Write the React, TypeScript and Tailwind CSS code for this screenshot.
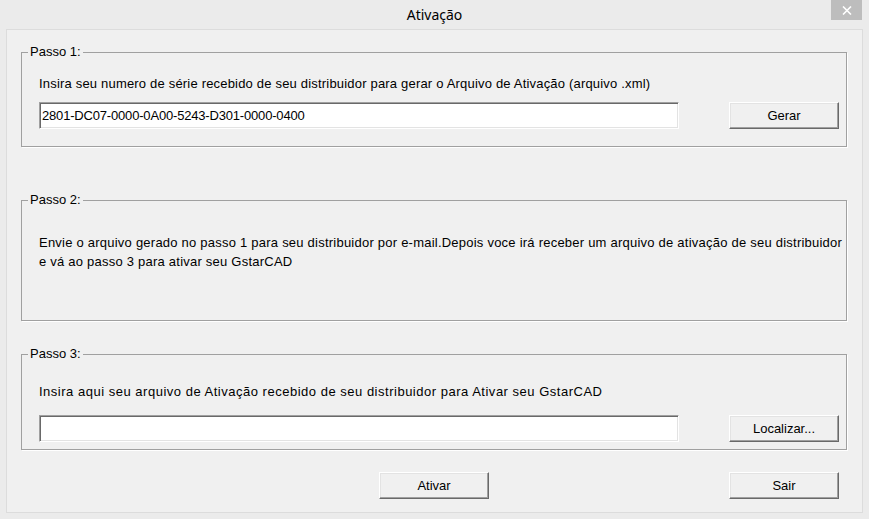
const font = { fontFamily: '"Liberation Sans", Arial, sans-serif' }

const GroupBox = ({ label, className, children }: { label: string; className: string; children: React.ReactNode }) => (
  <div className={`relative ml-[14px] w-[826px] border border-[#a0a0a0] shadow-[1px_1px_0_#ffffff] ${className}`}>
    <span className="absolute left-[6px] top-[-9px] bg-[#f0f0f0] px-[2px] text-[13px] leading-[15px] text-black">
      {label}
    </span>
    {children}
  </div>
)

const Field = ({ value }: { value: string }) => (
  <div className="flex h-[27px] w-[640px] items-center border border-t-[#a0a0a0] border-l-[#a0a0a0] border-r-white border-b-white bg-white pl-[2px] text-[13px] tracking-[-0.18px] text-black shadow-[inset_1px_1px_0_#696969,inset_-1px_-1px_0_#e3e3e3]">
    {value}
  </div>
)

const Btn = ({ label, className = '' }: { label: string; className?: string }) => (
  <button className={`flex h-[27px] w-[110px] items-center justify-center border border-t-white border-l-white border-r-[#696969] border-b-[#696969] bg-[#f0f0f0] text-[13px] text-black shadow-[inset_-1px_-1px_0_#a0a0a0,inset_1px_1px_0_#e3e3e3] ${className}`}>
    {label}
  </button>
)

export default function App() {
  return (
    <div className="flex h-[519px] w-[869px] flex-col bg-[#ebebeb]" style={font}>
      <div className="relative flex h-[29px] shrink-0 items-center justify-center">
        <span className="text-[14px] text-black" style={{ fontFamily: '"Noto Sans", "Open Sans", sans-serif' }}>
          Ativação
        </span>
        <div className="absolute right-[7px] top-0 flex h-[20px] w-[31px] items-center justify-center bg-[#bdbdbd]">
          <svg width="10" height="9" viewBox="0 0 10 9">
            <path d="M1 0.5 L9 8.5 M9 0.5 L1 8.5" stroke="#ffffff" strokeWidth="1.6" />
          </svg>
        </div>
      </div>

      <div className="mx-[6px] flex h-[484px] shrink-0 flex-col border border-[#dcdcdc] bg-[#f0f0f0] text-black">
        <GroupBox label="Passo 1:" className="mt-[22px] h-[95px]">
          <div className="pl-[17px] pt-[23px]">
            <p className="text-[13px] leading-[15px] tracking-[0.19px]">
              Insira seu numero de série recebido de seu distribuidor para gerar o Arquivo de Ativação (arquivo .xml)
            </p>
            <div className="mt-[11px] flex">
              <Field value="2801-DC07-0000-0A00-5243-D301-0000-0400" />
              <Btn label="Gerar" className="ml-[50px]" />
            </div>
          </div>
        </GroupBox>

        <GroupBox label="Passo 2:" className="mt-[53px] h-[121px]">
          <p className="pl-[17px] pt-[32px] text-[13px] leading-[19px] tracking-[0.23px]">
            Envie o arquivo gerado no passo 1 para seu distribuidor por e-mail.Depois voce irá receber um arquivo de ativação de seu distribuidor
            <br />e vá ao passo 3 para ativar seu GstarCAD
          </p>
        </GroupBox>

        <GroupBox label="Passo 3:" className="mt-[33px] h-[96px]">
          <div className="pl-[17px] pt-[29px]">
            <p className="text-[13px] leading-[15px] tracking-[0.51px]">
              Insira aqui seu arquivo de Ativação recebido de seu distribuidor para Ativar seu GstarCAD
            </p>
            <div className="mt-[16px] flex">
              <Field value="" />
              <Btn label="Localizar..." className="ml-[50px]" />
            </div>
          </div>
        </GroupBox>

        <div className="mt-[22px] flex pl-[372px]">
          <Btn label="Ativar" />
          <Btn label="Sair" className="ml-[240px]" />
        </div>
      </div>
    </div>
  )
}
